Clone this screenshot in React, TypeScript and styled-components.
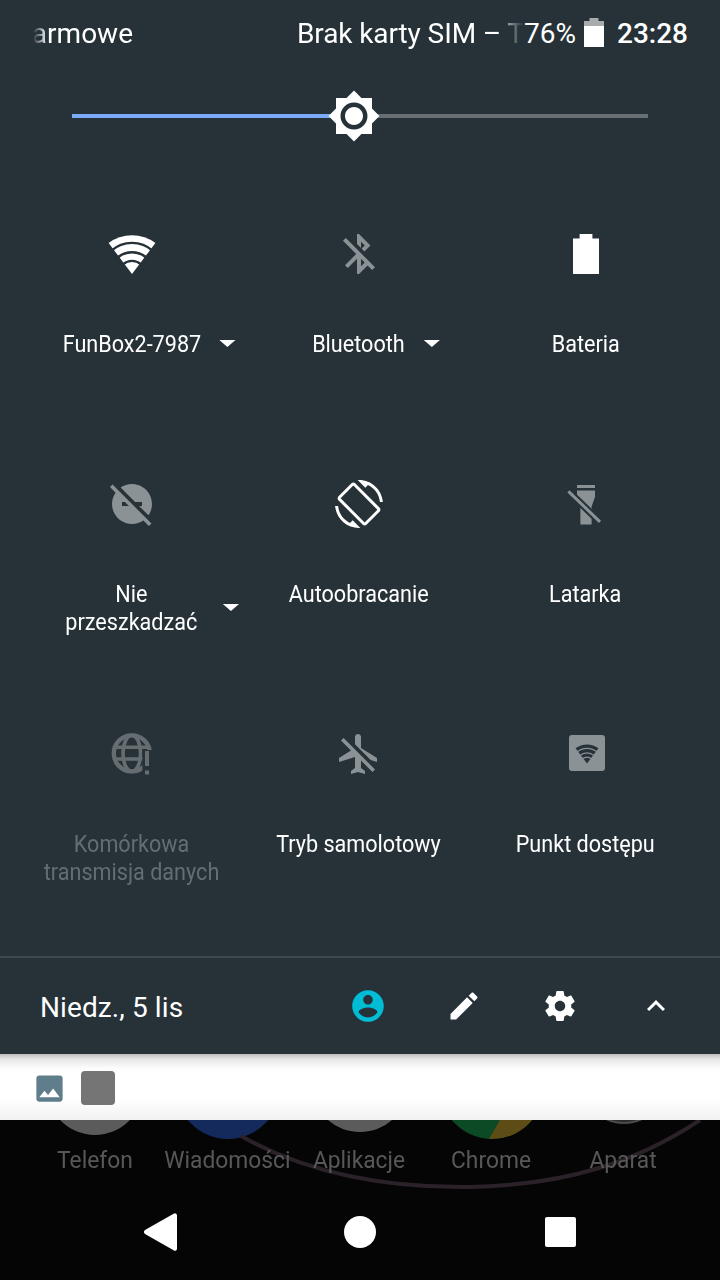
import React from 'react';
import styled, { createGlobalStyle } from 'styled-components';

const GlobalStyle = createGlobalStyle`
  html, body {
    margin: 0;
    padding: 0;
    background: #050505;
  }
  body {
    font-family: Roboto, "Liberation Sans", sans-serif;
  }
`;

const PANEL = '#263238';
const ICON_ON = '#ffffff';
const ICON_OFF = '#8b9296';
const ICON_DIM = '#656d71';

const S = {
  Screen: styled.div`
    width: 720px;
    height: 1280px;
    overflow: hidden;
    display: flex;
    flex-direction: column;
    background: #050505;
  `,

  Panel: styled.div`
    background: ${PANEL};
    display: flex;
    flex-direction: column;
    height: 1054px;
    flex: none;
  `,

  StatusBar: styled.div`
    height: 66px;
    display: flex;
    align-items: center;
    padding: 0 32px 0 33px;
    color: #fff;
    font-size: 28px;
    white-space: nowrap;
  `,

  Ticker: styled.div`
    width: 100px;
    display: flex;
    justify-content: flex-end;
    -webkit-mask-image: linear-gradient(to right, transparent 0, #000 14px);
    mask-image: linear-gradient(to right, transparent 0, #000 14px);
  `,

  Carrier: styled.div`
    margin-left: 164px;
    width: 227px;
    letter-spacing: -0.1px;
    -webkit-mask-image: linear-gradient(to left, transparent 0, rgba(0, 0, 0, 0.45) 14px, #000 22px);
    mask-image: linear-gradient(to left, transparent 0, rgba(0, 0, 0, 0.45) 14px, #000 22px);
  `,

  Percent: styled.div``,

  StatusBattery: styled.svg`
    width: 20px;
    height: 29px;
    margin-left: 8px;
    margin-top: -2px;
    flex: none;
  `,

  Clock: styled.div`
    margin-left: 13px;
    font-weight: 500;
  `,

  SliderRow: styled.div`
    height: 98px;
    padding: 2px 72px 0;
    box-sizing: border-box;
    display: flex;
    align-items: center;
  `,

  TrackOn: styled.div`
    width: 258px;
    height: 4px;
    background: #7cacf8;
  `,

  TrackOff: styled.div`
    flex: 1;
    height: 4px;
    background: #686f73;
  `,

  Thumb: styled.svg`
    width: 54px;
    height: 54px;
    margin: 0 -3px;
    flex: none;
    fill: #fff;
    position: relative;
  `,

  Grid: styled.div`
    height: 793px;
    padding: 0 0 0 18px;
    display: grid;
    grid-template-columns: repeat(3, 227px);
    grid-auto-rows: 250px;
    align-content: start;
    box-sizing: border-box;
  `,

  Tile: styled.div`
    display: flex;
    flex-direction: column;
    align-items: center;
    padding-top: 66px;
  `,

  TileIcon: styled.svg<{ $color: string }>`
    width: 48px;
    height: 48px;
    fill: ${({ $color }) => $color};
    flex: none;
  `,

  TileLabel: styled.div<{ $dim?: boolean }>`
    position: relative;
    margin-top: 52px;
    font-size: 24px;
    line-height: 28px;
    text-align: center;
    white-space: nowrap;
    transform: scaleX(0.9);
    color: ${({ $dim }) => ($dim ? ICON_DIM : '#fff')};
  `,

  Caret: styled.span<{ $gap: number }>`
    position: absolute;
    left: 100%;
    top: 50%;
    margin-left: ${({ $gap }) => $gap}px;
    margin-top: -4px;
    width: 0;
    height: 0;
    border-left: 9px solid transparent;
    border-right: 9px solid transparent;
    border-top: 7px solid #fff;
  `,

  Footer: styled.div`
    flex: 1;
    border-top: 2px solid #3e4a50;
    display: flex;
    align-items: center;
    padding: 0 0 0 40px;
    margin-top: -1px;
  `,

  DateText: styled.div`
    color: #fff;
    font-size: 28px;
    letter-spacing: 0.1px;
    width: 280px;
    padding-top: 2px;
  `,

  FooterActions: styled.div`
    display: grid;
    grid-template-columns: repeat(4, 96px);
    justify-items: center;
    align-items: center;
  `,

  FooterIcon: styled.svg<{ $color?: string; $size?: number }>`
    width: ${({ $size }) => $size ?? 36}px;
    height: ${({ $size }) => $size ?? 36}px;
    fill: ${({ $color }) => $color ?? '#fff'};
  `,

  Notifications: styled.div`
    height: 66px;
    flex: none;
    box-sizing: border-box;
    display: flex;
    align-items: center;
    gap: 14px;
    padding: 2px 0 0 32px;
    background: linear-gradient(to bottom, #bdbdbd 0, #e6e6e6 5px, #fcfcfc 14px, #fff 20px, #fff 46px, #f1f1f1 100%);
  `,

  NotifIcon: styled.svg`
    width: 35px;
    height: 35px;
    flex: none;
  `,

  NotifThumb: styled.div`
    width: 34px;
    height: 34px;
    border-radius: 4px;
    background: #757575;
  `,

  Home: styled.div`
    flex: 1;
    position: relative;
    display: flex;
    flex-direction: column;
  `,

  Wallpaper: styled.svg`
    position: absolute;
    left: 0;
    top: 0;
    width: 720px;
    height: 160px;
  `,

  Dock: styled.div`
    position: relative;
    height: 80px;
    flex: none;
    padding: 25px 0 0 29px;
    box-sizing: border-box;
    display: grid;
    grid-template-columns: repeat(5, 132px);
    align-content: start;
  `,

  DockLabel: styled.div`
    text-align: center;
    color: #585858;
    font-size: 24px;
    line-height: 30px;
    white-space: nowrap;
    transform: scaleX(0.95);
  `,

  NavRow: styled.div`
    position: relative;
    flex: 1;
    display: grid;
    grid-template-columns: repeat(3, 48px);
    justify-content: center;
    column-gap: 153px;
    align-items: center;
    padding-bottom: 16px;
    box-sizing: border-box;
  `,

  NavIcon: styled.svg`
    width: 48px;
    height: 48px;
    fill: #fff;
  `,
};

function FanWifi({ fg, bg }: { fg: string; bg: string }) {
  return (
    <>
      <path d="M12 22 .3 6.5A19.6 19.6 0 0 1 23.7 6.500Z" fill={fg} />
      <path
        d="M1.6 10.4A15.6 15.6 0 0 1 22.400 10.4M4.7 13.900A10.900 10.900 0 0 1 19.300 13.900M7.6 17.100A6.600 6.600 0 0 1 16.400 17.100"
        fill="none"
        stroke={bg}
        strokeWidth="1.200"
      />
    </>
  );
}

type Tile = {
  label: React.ReactNode;
  color: string;
  dim?: boolean;
  caretGap?: number;
  icon: React.ReactNode;
};

const TILES: Tile[] = [
  {
    label: 'FunBox2-7987',
    color: ICON_ON,
    caretGap: 20,
    icon: <FanWifi fg={ICON_ON} bg={PANEL} />,
  },
  {
    label: 'Bluetooth',
    color: ICON_OFF,
    caretGap: 21,
    icon: (
      <path d="M13 5.83l1.88 1.88-1.6 1.6 1.41 1.41 3.02-3.02L12 2h-1v5.03l2 2v-3.2zM5.41 4L4 5.41 10.59 12 5 17.59 6.41 19 11 14.41V22h1l4.29-4.29 2.3 2.29L20 18.59 5.41 4zM13 18.17v-3.76l1.88 1.88L13 18.17z" />
    ),
  },
  {
    label: 'Bateria',
    color: ICON_ON,
    icon: <path d="M8.8 2h6.400v2.200h3.300V22h-13V4.200h3.300z" />,
  },
  {
    label: (
      <>
        Nie
        <br />
        przeszkadzać
      </>
    ),
    color: ICON_OFF,
    caretGap: 28,
    icon: (
      <path d="M17 11v2h-1.46l4.68 4.68C21.34 16.07 22 14.11 22 12c0-5.52-4.48-10-10-10-2.11 0-4.07.66-5.68 1.78L13.54 11H17zM2.27 2.27L1 3.54l2.78 2.78C2.66 7.93 2 9.89 2 12c0 5.52 4.48 10 10 10 2.11 0 4.07-.66 5.68-1.78L20.46 23l1.27-1.27L11 11 2.27 2.27zM7 13v-2h1.46l2 2H7z" />
    ),
  },
  {
    label: 'Autoobracanie',
    color: ICON_ON,
    icon: (
      <path d="M16.48 2.52c3.27 1.55 5.61 4.72 5.97 8.48h1.5C23.44 4.84 18.29 0 12 0l-.66.03 3.81 3.81 1.33-1.32zm-6.25-.77c-.59-.59-1.54-.59-2.12 0L1.75 8.11c-.59.59-.59 1.54 0 2.12l12.02 12.02c.59.59 1.54.59 2.12 0l6.36-6.36c.59-.59.59-1.54 0-2.12L10.23 1.75zm4.6 19.44L2.81 9.17l6.36-6.36 12.02 12.02-6.36 6.36zm-7.31.29C4.25 19.94 1.91 16.76 1.55 13H.05C.56 19.16 5.71 24 12 24l.66-.03-3.81-3.81-1.33 1.32z" />
    ),
  },
  {
    label: 'Latarka',
    color: ICON_OFF,
    icon: (
      <>
        <path d="M7.500 2.500h9V4h-9zM7.500 5.300h9v3.200l-1.700 4.800v9H9.200v-9L7.500 8.500z" />
        <path d="M3.200 5.700 19 20.900" stroke={PANEL} strokeWidth="3.600" fill="none" />
        <path d="M3.200 5.700 19 20.900" stroke={ICON_OFF} strokeWidth="1.500" fill="none" />
      </>
    ),
  },
  {
    label: (
      <>
        Komórkowa
        <br />
        transmisja danych
      </>
    ),
    color: ICON_DIM,
    dim: true,
    icon: (
      <>
        <circle cx="11.900" cy="11.700" r="9" fill="none" stroke={ICON_DIM} strokeWidth="2.200" />
        <ellipse cx="11.900" cy="11.700" rx="4.400" ry="9" fill="none" stroke={ICON_DIM} strokeWidth="1.800" />
        <path d="M3.500 8.600h17M3.500 14.500h17" fill="none" stroke={ICON_DIM} strokeWidth="1.800" />
        <path d="M17.200 10H24V23h-6.800z" fill={PANEL} />
        <path d="M18.500 10.500h2V18h-2zM18.500 20.300h2v2h-2z" />
      </>
    ),
  },
  {
    label: 'Tryb samolotowy',
    color: ICON_OFF,
    icon: (
      <path d="M13 9V3.5c0-.83-.67-1.5-1.5-1.5S10 2.67 10 3.5v3.68l7.83 7.83L21 16v-2l-8-5zM3 5.27l4.99 4.99L2 14v2l8-2.5V19l-2 1.5V22l3.5-1 3.5 1v-1.5L13 19v-3.73L18.73 21 20 19.73 4.27 4 3 5.27z" />
    ),
  },
  {
    label: 'Punkt dostępu',
    color: ICON_OFF,
    icon: (
      <>
        <rect x="3.500" y="2.500" width="18" height="18" rx="1.500" />
        <g transform="translate(6.620 6) scale(.49)">
          <FanWifi fg={PANEL} bg={ICON_OFF} />
        </g>
      </>
    ),
  },
];

const DOCK = ['Telefon', 'Wiadomości', 'Aplikacje', 'Chrome', 'Aparat'];

function App() {
  return (
    <S.Screen>
      <GlobalStyle />
      <S.Panel>
        <S.StatusBar>
          <S.Ticker>armowe</S.Ticker>
          <S.Carrier>Brak karty SIM – T</S.Carrier>
          <S.Percent>76%</S.Percent>
          <S.StatusBattery viewBox="0 0 20 29">
            <path d="M5.500 0h9v3H20v6H0V3h5.500z" fill="#a8acae" />
            <path d="M0 8h20v21H0z" fill="#fff" />
          </S.StatusBattery>
          <S.Clock>23:28</S.Clock>
        </S.StatusBar>

        <S.SliderRow>
          <S.TrackOn />
          <S.Thumb viewBox="0 0 24 24">
            <path d="M20 8.69V4h-4.69L12 .69 8.69 4H4v4.69L.69 12 4 15.31V20h4.69L12 23.31 15.31 20H20v-4.69L23.31 12 20 8.69zM12 18c-3.31 0-6-2.69-6-6s2.69-6 6-6 6 2.69 6 6-2.69 6-6 6zm0-10c-2.21 0-4 1.79-4 4s1.79 4 4 4 4-1.79 4-4-1.79-4-4-4z" />
          </S.Thumb>
          <S.TrackOff />
        </S.SliderRow>

        <S.Grid>
          {TILES.map((tile, index) => (
            <S.Tile key={index}>
              <S.TileIcon viewBox="0 0 24 24" $color={tile.color}>
                {tile.icon}
              </S.TileIcon>
              <S.TileLabel $dim={tile.dim}>
                {tile.label}
                {tile.caretGap && <S.Caret $gap={tile.caretGap} />}
              </S.TileLabel>
            </S.Tile>
          ))}
        </S.Grid>

        <S.Footer>
          <S.DateText>Niedz., 5 lis</S.DateText>
          <S.FooterActions>
            <S.FooterIcon viewBox="0 0 24 24" $color="#00bcd4" $size={38}>
              <path d="M12 2C6.48 2 2 6.48 2 12s4.48 10 10 10 10-4.48 10-10S17.52 2 12 2zm0 3c1.66 0 3 1.34 3 3s-1.34 3-3 3-3-1.34-3-3 1.34-3 3-3zm0 14.2c-2.5 0-4.71-1.28-6-3.22.03-1.99 4-3.08 6-3.08 1.99 0 5.97 1.09 6 3.08-1.29 1.94-3.5 3.22-6 3.22z" />
            </S.FooterIcon>
            <S.FooterIcon viewBox="0 0 24 24">
              <path d="M3 17.25V21h3.75L17.81 9.94l-3.75-3.75L3 17.25zM20.71 7.04c.39-.39.39-1.02 0-1.41l-2.34-2.34c-.39-.39-1.02-.39-1.41 0l-1.83 1.83 3.75 3.75 1.83-1.83z" />
            </S.FooterIcon>
            <S.FooterIcon viewBox="0 0 24 24">
              <path d="M19.43 12.98c.04-.32.07-.64.07-.98s-.03-.66-.07-.98l2.11-1.65c.19-.15.24-.42.12-.64l-2-3.46c-.12-.22-.39-.3-.61-.22l-2.49 1c-.52-.4-1.08-.73-1.69-.98l-.38-2.65C14.46 2.18 14.25 2 14 2h-4c-.25 0-.46.18-.49.42l-.38 2.65c-.61.25-1.17.59-1.69.98l-2.49-1c-.23-.09-.49 0-.61.22l-2 3.46c-.13.22-.07.49.12.64l2.11 1.65c-.04.32-.07.65-.07.98s.03.66.07.98l-2.11 1.65c-.19.15-.24.42-.12.64l2 3.46c.12.22.39.3.61.22l2.49-1c.52.4 1.08.73 1.69.98l.38 2.65c.03.24.24.42.49.42h4c.25 0 .46-.18.49-.42l.38-2.65c.61-.25 1.17-.59 1.69-.98l2.49 1c.23.09.49 0 .61-.22l2-3.46c.12-.22.07-.49-.12-.64l-2.11-1.65zM12 15.5c-1.93 0-3.5-1.57-3.5-3.5s1.57-3.5 3.5-3.5 3.5 1.57 3.5 3.5-1.57 3.5-3.5 3.5z" />
            </S.FooterIcon>
            <S.FooterIcon viewBox="0 0 24 24">
              <path d="M12 8l-6 6 1.41 1.41L12 10.83l4.59 4.58L18 14z" />
            </S.FooterIcon>
          </S.FooterActions>
        </S.Footer>
      </S.Panel>

      <S.Notifications>
        <S.NotifIcon viewBox="0 0 24 24" fill="#607d8b">
          <path d="M21 19V5c0-1.1-.9-2-2-2H5c-1.1 0-2 .9-2 2v14c0 1.1.9 2 2 2h14c1.1 0 2-.9 2-2zM8.5 13.5l2.5 3.01L14.5 12l4.5 6H5l3.5-4.5z" />
        </S.NotifIcon>
        <S.NotifThumb />
      </S.Notifications>

      <S.Home>
        <S.Wallpaper viewBox="0 0 720 160">
          <circle cx="95" cy="-33" r="48" fill="#5b5b5b" />
          <circle cx="228" cy="-33" r="52" fill="#14295c" />
          <circle cx="360" cy="-37" r="49" fill="#5b5b5b" />
          <circle cx="492" cy="-33" r="52" fill="#0c4a26" />
          <path d="M489 19 500 0H532A52 52 0 0 1 489 19z" fill="#5e4c16" />
          <circle cx="624" cy="-38" r="41" fill="#2c2c2c" stroke="#4a4a4a" strokeWidth="2" />
          <path d="M241 16C310 55 390 68 470 67 570 65 640 40 700 0" fill="none" stroke="#2a2228" strokeWidth="4" />
        </S.Wallpaper>
        <S.Dock>
          {DOCK.map((name) => (
            <S.DockLabel key={name}>{name}</S.DockLabel>
          ))}
        </S.Dock>
        <S.NavRow>
          <S.NavIcon viewBox="0 0 48 48">
            <path d="M42 7.500v33c0 2-2 3-3.400 1.800L10 26c-1.400-1.200-1.400-2.800 0-4L38.600 5.700C40 4.500 42 5.500 42 7.500z" />
          </S.NavIcon>
          <S.NavIcon viewBox="0 0 48 48">
            <circle cx="24" cy="24" r="16" />
          </S.NavIcon>
          <S.NavIcon viewBox="0 0 48 48">
            <rect x="8" y="9" width="31" height="30" rx="2" />
          </S.NavIcon>
        </S.NavRow>
      </S.Home>
    </S.Screen>
  );
}

export default App;
